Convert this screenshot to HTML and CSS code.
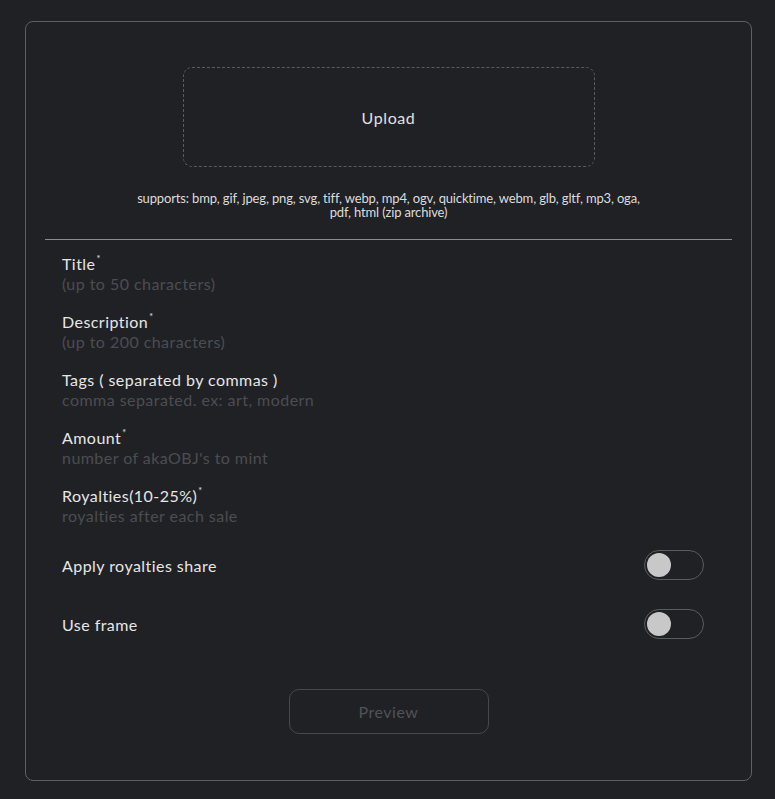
FILE: index.html
```html
<!DOCTYPE html>
<html lang="en">
<head>
<meta charset="utf-8">
<title>Mint</title>
<link rel="stylesheet" href="styles.css">
</head>
<body>
<div class="card">
  <div class="upload-area">
    <div class="upload-box">Upload</div>
    <p class="supports">supports: bmp, gif, jpeg, png, svg, tiff, webp, mp4, ogv, quicktime, webm, glb, gltf, mp3, oga,<br>pdf, html (zip archive)</p>
  </div>
  <hr class="divider">
  <div class="fields">
    <label class="field">
      <span class="label">Title<sup>*</sup></span>
      <input class="input" type="text" placeholder="(up to 50 characters)">
    </label>
    <label class="field">
      <span class="label">Description<sup>*</sup></span>
      <input class="input" type="text" placeholder="(up to 200 characters)">
    </label>
    <label class="field">
      <span class="label">Tags ( separated by commas )</span>
      <input class="input" type="text" placeholder="comma separated. ex: art, modern">
    </label>
    <label class="field">
      <span class="label">Amount<sup>*</sup></span>
      <input class="input" type="text" placeholder="number of akaOBJ's to mint">
    </label>
    <label class="field">
      <span class="label">Royalties(10-25%)<sup>*</sup></span>
      <input class="input" type="text" placeholder="royalties after each sale">
    </label>
  </div>
  <div class="toggles">
    <div class="toggle-row">
      <span class="toggle-label">Apply royalties share</span>
      <span class="toggle"><span class="knob"></span></span>
    </div>
    <div class="toggle-row">
      <span class="toggle-label">Use frame</span>
      <span class="toggle"><span class="knob"></span></span>
    </div>
  </div>
  <div class="actions">
    <button class="preview" type="button">Preview</button>
  </div>
</div>
</body>
</html>
```
FILE: styles.css
```css
* { box-sizing: border-box; }
html, body { margin: 0; padding: 0; }
body {
  background: #202125;
  font-family: Lato, "Open Sans", "Liberation Sans", sans-serif;
  color: #e6e6e6;
}
.card {
  margin: 21px 23px 19px 25px;
  width: 727px;
  height: 760px;
  border: 1px solid #5e5f63;
  border-radius: 8px;
  padding: 45px 19px 0 19px;
}
.upload-area {
  display: flex;
  flex-direction: column;
  align-items: center;
}
.upload-box {
  width: 412px;
  height: 100px;
  border: 1px dashed #5a5b5f;
  border-radius: 9px;
  display: flex;
  align-items: center;
  justify-content: center;
  font-size: 16px;
  letter-spacing: 0.6px;
  color: #e0e0e0;
}
.supports {
  margin: 24px 0 0;
  font-size: 13px;
  line-height: 14px;
  letter-spacing: -0.15px;
  text-align: center;
  color: #dcdcdc;
}
.divider {
  margin: 20px 0 0;
  border: 0;
  height: 1px;
  background: #8a8b8f;
}
.fields {
  display: flex;
  flex-direction: column;
  gap: 18px;
  padding: 13px 17px 0;
}
.field {
  display: flex;
  flex-direction: column;
}
.label {
  font-size: 16px;
  line-height: 21px;
  letter-spacing: 0.45px;
  color: #e6e6e6;
}
.label sup {
  font-size: 9px;
  vertical-align: top;
  line-height: 12px;
  margin-left: 1px;
}
.input {
  font: inherit;
  font-size: 16px;
  line-height: 19px;
  height: 19px;
  letter-spacing: 0.45px;
  padding: 0;
  margin: 0;
  border: 0;
  outline: 0;
  background: transparent;
  color: #e6e6e6;
}
.input::placeholder { color: #4c4d51; }
.toggles {
  display: flex;
  flex-direction: column;
  gap: 29px;
  padding: 25px 28px 0 17px;
}
.toggle-row {
  display: flex;
  align-items: center;
  justify-content: space-between;
  height: 30px;
}
.toggle-label {
  font-size: 16px;
  letter-spacing: 0.45px;
  color: #e6e6e6;
}
.toggle {
  width: 60px;
  height: 30px;
  border: 1px solid #5b5c60;
  border-radius: 15px;
  padding: 2px;
  display: flex;
  align-items: center;
}
.knob {
  width: 24px;
  height: 24px;
  border-radius: 50%;
  background: #c8c8c8;
}
.actions {
  display: flex;
  justify-content: center;
  padding-top: 50px;
}
.preview {
  width: 200px;
  height: 45px;
  border: 1px solid #47484c;
  border-radius: 10px;
  background: transparent;
  font-family: inherit;
  font-size: 16px;
  letter-spacing: 0.5px;
  color: #515256;
}
```
